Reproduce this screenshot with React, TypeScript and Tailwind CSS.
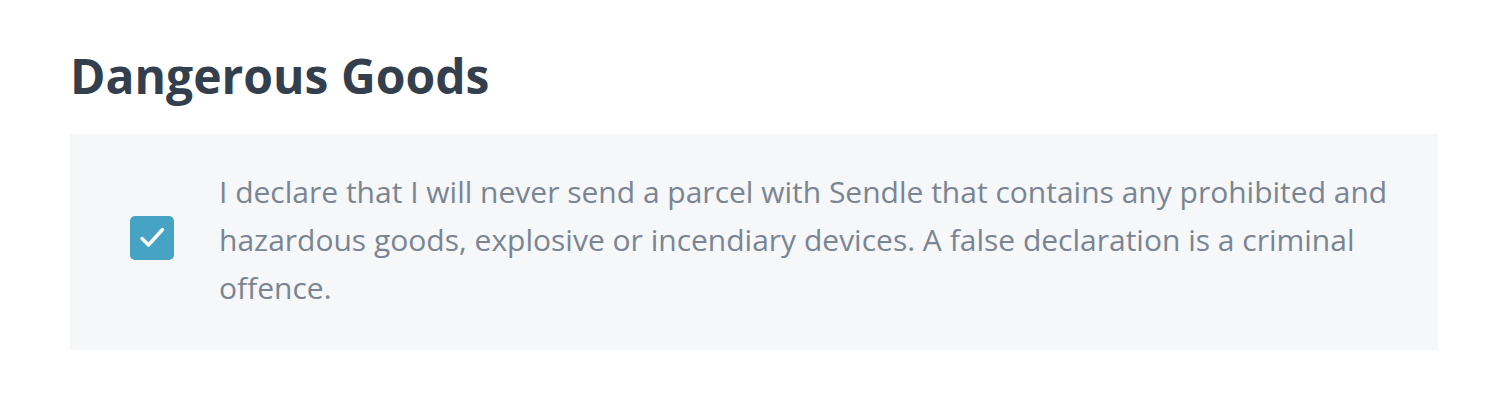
const CheckIcon = () => (
  <svg viewBox="0 0 44 44" className="w-[44px] h-[44px]">
    <rect width="44" height="44" rx="5" fill="#46a3c4" />
    <path
      d="M12 22.5 L18.5 29 L32.5 13.5"
      fill="none"
      stroke="#fff"
      strokeWidth="3.4"
      strokeLinecap="round"
      strokeLinejoin="round"
    />
  </svg>
);

export default function App() {
  return (
    <div className="bg-white w-[1504px] h-[414px] px-[70px] pt-[44px] font-['Open_Sans',sans-serif]">
      <h1 className="text-[48px] leading-[64px] font-bold text-[#333f4d]">
        Dangerous Goods
      </h1>
      <div className="mt-[26px] w-[1368px] bg-[#f5f7f9] flex items-center pl-[60px] pr-[40px] pt-[34px] pb-[38px]">
        <div className="shrink-0 mb-[5px]">
          <CheckIcon />
        </div>
        <p className="ml-[45px] text-[30px] leading-[48px] text-[#7b8592]">
          I declare that I will never send a parcel with Sendle that contains any prohibited and
          hazardous goods, explosive or incendiary devices. A false declaration is a criminal
          offence.
        </p>
      </div>
    </div>
  );
}
